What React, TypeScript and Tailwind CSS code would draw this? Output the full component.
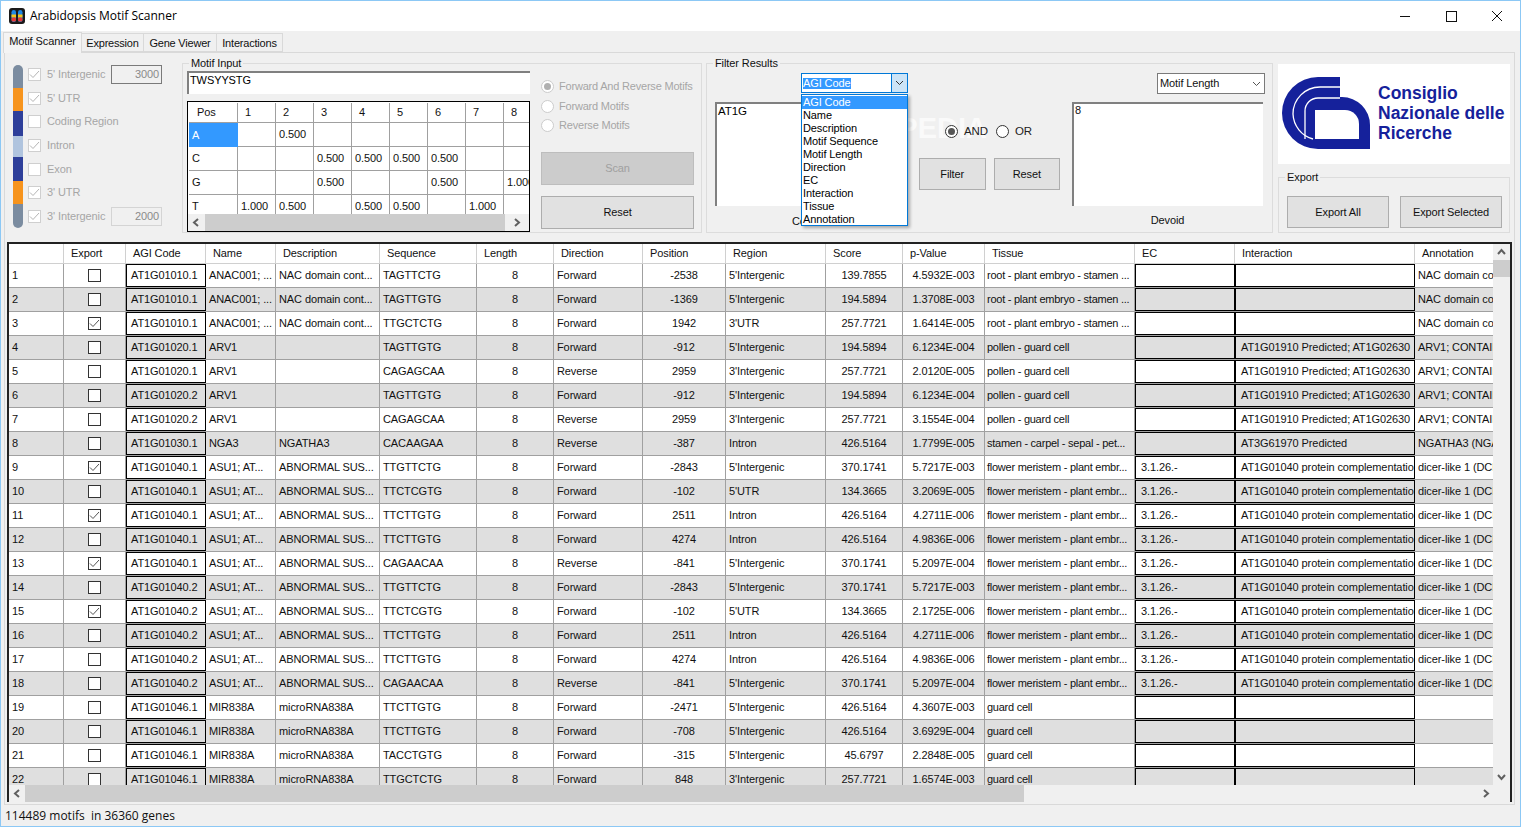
import React from "react";

const W = [55, 62, 80, 70, 104, 97, 77, 89, 83, 100, 77, 82, 150, 100, 180, 81];

const NAC = ["ANAC001; ...", "NAC domain cont...", "root - plant embryo - stamen ...", "", "", "NAC domain conta"];
const ARV = ["ARV1", "", "pollen - guard cell", "", "AT1G01910 Predicted; AT1G02630", "ARV1; CONTAINS"];
const ASU = ["ASU1; AT...", "ABNORMAL SUS...", "flower meristem - plant embr...", "3.1.26.-", "AT1G01040 protein complementatio", "dicer-like 1 (DCL1"];
const MIR = ["MIR838A", "microRNA838A", "guard cell", "", "", ""];
const NGA = ["NGA3", "NGATHA3", "stamen - carpel - sepal - pet...", "", "AT3G61970 Predicted", "NGATHA3 (NGA3"];

const rows: [boolean, string, string[], string, string, string, string, string, string][] = [
  [false, "AT1G01010.1", NAC, "TAGTTCTG", "Forward", "-2538", "5'Intergenic", "139.7855", "4.5932E-003"],
  [false, "AT1G01010.1", NAC, "TAGTTGTG", "Forward", "-1369", "5'Intergenic", "194.5894", "1.3708E-003"],
  [true, "AT1G01010.1", NAC, "TTGCTCTG", "Forward", "1942", "3'UTR", "257.7721", "1.6414E-005"],
  [false, "AT1G01020.1", ARV, "TAGTTGTG", "Forward", "-912", "5'Intergenic", "194.5894", "6.1234E-004"],
  [false, "AT1G01020.1", ARV, "CAGAGCAA", "Reverse", "2959", "3'Intergenic", "257.7721", "2.0120E-005"],
  [false, "AT1G01020.2", ARV, "TAGTTGTG", "Forward", "-912", "5'Intergenic", "194.5894", "6.1234E-004"],
  [false, "AT1G01020.2", ARV, "CAGAGCAA", "Reverse", "2959", "3'Intergenic", "257.7721", "3.1554E-004"],
  [false, "AT1G01030.1", NGA, "CACAAGAA", "Reverse", "-387", "Intron", "426.5164", "1.7799E-005"],
  [true, "AT1G01040.1", ASU, "TTGTTCTG", "Forward", "-2843", "5'Intergenic", "370.1741", "5.7217E-003"],
  [false, "AT1G01040.1", ASU, "TTCTCGTG", "Forward", "-102", "5'UTR", "134.3665", "3.2069E-005"],
  [true, "AT1G01040.1", ASU, "TTCTTGTG", "Forward", "2511", "Intron", "426.5164", "4.2711E-006"],
  [false, "AT1G01040.1", ASU, "TTCTTGTG", "Forward", "4274", "Intron", "426.5164", "4.9836E-006"],
  [true, "AT1G01040.1", ASU, "CAGAACAA", "Reverse", "-841", "5'Intergenic", "370.1741", "5.2097E-004"],
  [false, "AT1G01040.2", ASU, "TTGTTCTG", "Forward", "-2843", "5'Intergenic", "370.1741", "5.7217E-003"],
  [true, "AT1G01040.2", ASU, "TTCTCGTG", "Forward", "-102", "5'UTR", "134.3665", "2.1725E-006"],
  [false, "AT1G01040.2", ASU, "TTCTTGTG", "Forward", "2511", "Intron", "426.5164", "4.2711E-006"],
  [false, "AT1G01040.2", ASU, "TTCTTGTG", "Forward", "4274", "Intron", "426.5164", "4.9836E-006"],
  [false, "AT1G01040.2", ASU, "CAGAACAA", "Reverse", "-841", "5'Intergenic", "370.1741", "5.2097E-004"],
  [false, "AT1G01046.1", MIR, "TTCTTGTG", "Forward", "-2471", "5'Intergenic", "426.5164", "4.3607E-003"],
  [false, "AT1G01046.1", MIR, "TTCTTGTG", "Forward", "-708", "5'Intergenic", "426.5164", "3.6929E-004"],
  [false, "AT1G01046.1", MIR, "TACCTGTG", "Forward", "-315", "5'Intergenic", "45.6797", "2.2848E-005"],
  [false, "AT1G01046.1", MIR, "TTGCTCTG", "Forward", "848", "3'Intergenic", "257.7721", "1.6574E-003"],
];

const headers = ["", "Export", "AGI Code", "Name", "Description", "Sequence", "Length", "Direction", "Position", "Region", "Score", "p-Value", "Tissue", "EC", "Interaction", "Annotation"];

function Check({ checked, muted }: { checked: boolean; muted?: boolean }) {
  return (
    <span className={muted ? "flex h-[13px] w-[13px] shrink-0 items-center justify-center border border-[#cfcfcf] bg-white" : "flex h-[13px] w-[13px] shrink-0 items-center justify-center border border-[#333333] bg-white"}>
      {checked && (
        <svg width="11" height="9" viewBox="0 0 11 9" fill="none">
          <path d="M1 4.5 L4 7.5 L10 1" stroke={muted ? "#b5b5b5" : "#555555"} strokeWidth="1" />
        </svg>
      )}
    </span>
  );
}

function Cell({ w, className, children }: { w: number; className?: string; children?: React.ReactNode }) {
  return (
    <div style={{ width: w }} className={"flex h-full shrink-0 items-center overflow-hidden whitespace-nowrap border-r border-[#a0a0a0] " + (className ?? "")}>
      {children}
    </div>
  );
}

function BoxCell({ w, className, children }: { w: number; className?: string; children?: React.ReactNode }) {
  return (
    <div style={{ width: w }} className={"flex h-full shrink-0 items-center overflow-hidden whitespace-nowrap border border-black " + (className ?? "")}>
      {children}
    </div>
  );
}

function Chevron({ dir }: { dir: "l" | "r" | "u" | "d" }) {
  const d = { l: "M6 1 L2 4.5 L6 8", r: "M2 1 L6 4.5 L2 8", u: "M1 6 L4.5 2 L8 6", d: "M1 2 L4.5 6 L8 2" }[dir];
  return (
    <svg width="9" height="9" viewBox="0 0 9 9" fill="none">
      <path d={d} stroke="#606060" strokeWidth="2" />
    </svg>
  );
}

function RegionRow({ label, checked, value, strong }: { label: string; checked: boolean; value?: string; strong?: boolean }) {
  return (
    <div className="flex h-[18px] items-center">
      <Check checked={checked} muted />
      <span className="ml-[6px] text-[#a6a6a6]">{label}</span>
      {value && (
        <span className={strong ? "ml-auto flex h-[19px] w-[51px] items-center justify-end border border-[#7a7a7a] bg-[#f0f0f0] pr-[2px] text-[#8a8a8a]" : "ml-auto flex h-[19px] w-[51px] items-center justify-end border border-[#d4d4d4] bg-[#f0f0f0] pr-[2px] text-[#8a8a8a]"}>
          {value}
        </span>
      )}
    </div>
  );
}

function Radio({ label, checked, muted }: { label: string; checked?: boolean; muted?: boolean }) {
  return (
    <div className={muted ? "flex items-center gap-[5px] whitespace-nowrap" : "flex items-center gap-[6px] whitespace-nowrap"}>
      <span className={muted ? "flex h-[13px] w-[13px] shrink-0 items-center justify-center rounded-full border border-[#cccccc] bg-white" : "flex h-[13px] w-[13px] shrink-0 items-center justify-center rounded-full border border-[#333333] bg-white"}>
        {checked && <span className={muted ? "h-[7px] w-[7px] rounded-full bg-[#b0b0b0]" : "h-[7px] w-[7px] rounded-full bg-[#555555]"} />}
      </span>
      <span className={muted ? "tracking-[-0.2px] text-[#a6a6a6]" : "text-[11.5px] text-[#222222]"}>{label}</span>
    </div>
  );
}

function Btn({ children, className }: { children: React.ReactNode; className?: string }) {
  return (
    <div className={"flex items-center justify-center border border-[#adadad] bg-[#e1e1e1] text-[#111111] " + (className ?? "")}>{children}</div>
  );
}

function Group({ label, className, children }: { label: string; className?: string; children?: React.ReactNode }) {
  return (
    <div className={"relative border border-[#dcdcdc] " + (className ?? "")}>
      <span className="absolute left-[6px] top-[-8px] bg-[#f0f0f0] px-[2px] leading-[14px] text-[#111111]">{label}</span>
      {children}
    </div>
  );
}

const matrix = [
  ["A", "", "0.500", "", "", "", "", "", ""],
  ["C", "", "", "0.500", "0.500", "0.500", "0.500", "", ""],
  ["G", "", "", "0.500", "", "", "0.500", "", "1.000"],
  ["T", "1.000", "0.500", "", "0.500", "0.500", "", "1.000", ""],
];

const LIST = ["AGI Code", "Name", "Description", "Motif Sequence", "Motif Length", "Direction", "EC", "Interaction", "Tissue", "Annotation"];

export default function App() {
  return (
    <div className="flex h-[827px] w-[1521px] flex-col overflow-hidden border border-[#8cc8f5] bg-[#f0f0f0] text-[11px] leading-none tracking-[-0.1px] text-[#111111] [font-family:'Liberation_Sans',Arial,sans-serif]">
      {/* title */}
      <div className="flex h-[30px] shrink-0 items-center bg-white tracking-normal">
        <svg className="ml-[8px]" width="16" height="16" viewBox="0 0 16 16">
          <rect width="16" height="16" rx="3" fill="#1a1a1a" />
          <rect x="2.5" y="2" width="4.5" height="12" rx="2.2" fill="#1e88e5" />
          <rect x="9" y="2" width="4.5" height="12" rx="2.2" fill="#1e88e5" />
          <rect x="2.5" y="6.5" width="4.5" height="3" fill="#f5c518" />
          <rect x="9" y="6.5" width="4.5" height="3" fill="#f5c518" />
          <rect x="2.5" y="9.5" width="4.5" height="4" rx="1.5" fill="#e53935" />
          <rect x="9" y="9.5" width="4.5" height="4" rx="1.5" fill="#e53935" />
        </svg>
        <span className="ml-[5px] text-[12px] text-black [font-family:'Open_Sans',sans-serif]">Arabidopsis Motif Scanner</span>
        <div className="ml-auto flex items-center">
          <svg width="46" height="30" viewBox="0 0 46 30" fill="none"><path d="M18 15.5 H28" stroke="#111" /></svg>
          <svg width="46" height="30" viewBox="0 0 46 30" fill="none"><rect x="18.5" y="10.5" width="10" height="10" stroke="#111" /></svg>
          <svg width="46" height="30" viewBox="0 0 46 30" fill="none"><path d="M18 10 L28 20 M28 10 L18 20" stroke="#111" /></svg>
        </div>
      </div>

      {/* tabs */}
      <div className="flex h-[21px] shrink-0 items-end pl-[2px]">
        <div className="z-10 -mb-px flex h-[21px] w-[79px] items-center justify-center border border-b-0 border-[#d9d9d9] bg-[#f4f4f4] pb-[3px]">Motif Scanner</div>
        <div className="flex h-[19px] w-[62px] items-center justify-center border border-l-0 border-[#d9d9d9] pt-[1px] tracking-[-0.2px]">Expression</div>
        <div className="flex h-[19px] w-[73px] items-center justify-center border border-l-0 border-[#d9d9d9] pt-[1px] tracking-[-0.2px]">Gene Viewer</div>
        <div className="flex h-[19px] w-[66px] items-center justify-center border border-l-0 border-[#d9d9d9] pt-[1px] tracking-[-0.2px]">Interactions</div>
      </div>

      {/* tab page */}
      <div className="ml-[3px] mr-[5px] flex min-h-0 flex-1 flex-col border border-[#d9d9d9] bg-[#f0f0f0] pl-[2px] pr-[2px] pb-[2px]">
        {/* top */}
        <div className="flex h-[189px] shrink-0 pt-[10px]">
          <div className="ml-[6px] flex h-[165px] w-[149px] shrink-0">
            <div className="mt-[2px] flex h-[163px] w-[10px] shrink-0 flex-col overflow-hidden rounded-full">
              <div className="h-[23px] bg-[#7b8ca0]" />
              <div className="h-[23px] bg-[#f7941d]" />
              <div className="h-[25px] bg-[#2e3f9a]" />
              <div className="h-[21px] bg-[#b0c4de]" />
              <div className="h-[24px] bg-[#2e3f9a]" />
              <div className="h-[23px] bg-[#f7941d]" />
              <div className="h-[24px] bg-[#7b8ca0]" />
            </div>
            <div className="ml-[5px] mt-[2.5px] flex flex-1 flex-col gap-[5.67px]">
              <RegionRow label="5' Intergenic" checked value="3000" strong />
              <RegionRow label="5' UTR" checked />
              <RegionRow label="Coding Region" checked={false} />
              <RegionRow label="Intron" checked />
              <RegionRow label="Exon" checked={false} />
              <RegionRow label="3' UTR" checked />
              <RegionRow label="3' Intergenic" checked value="2000" />
            </div>
          </div>

          <Group label="Motif Input" className="ml-[20px] flex h-[170px] w-[520px] shrink-0 pl-[4px] pt-[7px]">
            <div className="flex w-[343px] shrink-0 flex-col">
              <div className="flex h-[23px] items-start border-2 border-b-0 border-r-0 border-[#808080] bg-white pl-[1px] pt-[2px] text-[11px] text-black">TWSYYSTG</div>
              <div className="mt-[7px] flex h-[131px] flex-col overflow-hidden border border-black bg-white">
                <div className="min-h-0 flex-1 overflow-hidden pl-[1px] pt-[1px]">
                  <div className="flex h-[20px]">
                    <div className="flex w-[49px] shrink-0 items-center border-r border-b border-[#a0a0a0] pb-[1px] pl-[8px]">Pos</div>
                    {[1, 2, 3, 4, 5, 6, 7, 8].map((n) => (
                      <div key={n} className="flex w-[38px] shrink-0 items-center border-r border-b border-[#a0a0a0] pb-[1px] pl-[7px]">{n}</div>
                    ))}
                  </div>
                  {matrix.map((m, i) => (
                    <div key={m[0]} className="flex h-[24px]">
                      <div className={i === 0 ? "flex w-[49px] shrink-0 items-center bg-[#3399ff] pl-[3px] text-white" : "flex w-[49px] shrink-0 items-center border-r border-b border-[#a0a0a0] pl-[3px]"}>{m[0]}</div>
                      {m.slice(1).map((v, j) => (
                        <div key={j} className="flex w-[38px] shrink-0 items-center overflow-hidden whitespace-nowrap border-r border-b border-[#a0a0a0] pl-[3px]">{v}</div>
                      ))}
                    </div>
                  ))}
                </div>
                <div className="flex h-[17px] shrink-0 items-center bg-[#f0f0f0]">
                  <div className="flex w-[17px] justify-center"><Chevron dir="l" /></div>
                  <div className="h-full flex-1 bg-[#cdcdcd]" />
                  <div className="flex w-[24px] justify-center"><Chevron dir="r" /></div>
                </div>
              </div>
            </div>
            <div className="ml-[11px] flex w-[153px] shrink-0 flex-col">
              <div className="flex flex-col gap-[6.5px] pt-[9px]">
                <Radio label="Forward And Reverse Motifs" checked muted />
                <Radio label="Forward Motifs" muted />
                <Radio label="Reverse Motifs" muted />
              </div>
              <div className="mt-[20px] flex h-[33px] shrink-0 items-center justify-center border border-[#bdbdbd] bg-[#cccccc] text-[#a0a0a0]">Scan</div>
              <Btn className="mt-[11px] h-[33px] shrink-0">Reset</Btn>
            </div>
          </Group>

          <Group label="Filter Results" className="ml-[4px] flex h-[170px] w-[567px] shrink-0 pl-[8px]">
            <div className="relative flex w-[193px] shrink-0 flex-col">
              <div className="ml-[86px] mt-[9px] flex h-[20px] w-[107px] items-center border border-[#0078d7] bg-white pl-[1px]">
                <span className="bg-[#3399ff] text-white">AGI Code</span>
                <div className="ml-auto flex h-full w-[16px] items-center justify-center border-l border-[#0078d7] bg-[#cce4f7]">
                  <svg width="9" height="6" viewBox="0 0 9 6" fill="none"><path d="M1 1 L4.5 4.5 L8 1" stroke="#333" /></svg>
                </div>
              </div>
              <div className="mt-[9px] flex h-[104px] w-[160px] items-start border-2 border-b-0 border-r-0 border-[#808080] bg-white pl-[1px] pt-[2px] text-[11.5px] text-black">AT1G</div>
              <div className="ml-[77px] mt-[10px]">Contains</div>
              <span className="absolute left-[106px] top-[50px] whitespace-nowrap text-[29px] font-bold tracking-normal text-white/70">SOFTPEDIA</span>
              {/* open list */}
              <div className="absolute left-[86px] top-[30px] z-20 flex h-[132px] w-[107px] flex-col border border-[#0078d7] bg-white pt-[1px] leading-[13px] text-black shadow-[2px_2px_3px_rgba(0,0,0,0.3)]">
                {LIST.map((t, i) => (
                  <div key={t} className={i === 0 ? "h-[13px] shrink-0 bg-[#3399ff] pl-[1px] text-white" : "h-[13px] shrink-0 pl-[1px]"}>{t}</div>
                ))}
              </div>
            </div>
            <div className="relative ml-[11px] flex w-[141px] shrink-0 flex-col">
              <div className="mt-[61px] flex items-center gap-[8px] pl-[26px]">
                <Radio label="AND" checked />
                <Radio label="OR" />
              </div>
              <div className="mt-[20px] flex gap-[8px]">
                <Btn className="h-[32px] w-[67px]">Filter</Btn>
                <Btn className="h-[32px] w-[67px]">Reset</Btn>
              </div>
            </div>
            <div className="ml-[12px] flex w-[193px] shrink-0 flex-col">
              <div className="ml-[85px] mt-[9px] flex h-[21px] w-[108px] items-center border border-[#7a7a7a] bg-white pl-[2px]">
                Motif Length
                <svg className="ml-auto mr-[3px]" width="9" height="6" viewBox="0 0 9 6" fill="none"><path d="M1 1 L4.5 4.5 L8 1" stroke="#555" /></svg>
              </div>
              <div className="mt-[8px] flex h-[104px] w-[191px] items-start border-2 border-b-0 border-r-0 border-[#808080] bg-white pl-[1px] pt-[1px]">8</div>
              <div className="mt-[9px] w-[191px] text-center">Devoid</div>
            </div>
          </Group>

          <div className="ml-[5px] flex w-[232px] shrink-0 flex-col">
            <div className="mt-[1px] flex h-[100px] shrink-0 items-center bg-white pb-[2px] pl-[4px]">
              <svg width="88" height="72" viewBox="0 0 88 72" fill="none">
                <path d="M58 0 H36 A36 36 0 0 0 36 72 H88 V48 A28 28 0 0 0 60 20 H58 Z" fill="#15219b" />
                <path d="M33 62 V33 H63 A14 14 0 0 1 77 47 V62 Z" fill="white" />
                <path d="M58 10 H38 A27 27 0 0 0 11 37 A27 27 0 0 0 31 62" stroke="white" strokeWidth="1.3" />
                <path d="M58 21 H36 A13 13 0 0 0 23 34 V62" stroke="white" strokeWidth="1.3" />
              </svg>
              <div className="ml-[8px] text-[17.5px] font-bold leading-[20px] tracking-normal text-[#15219b]">
                <div>Consiglio</div>
                <div className="whitespace-nowrap">Nazionale delle</div>
                <div>Ricerche</div>
              </div>
            </div>
            <Group label="Export" className="mt-[13px] flex h-[56px] shrink-0 gap-[11px] pl-[8px] pt-[18px]">
              <Btn className="h-[32px] w-[102px]">Export All</Btn>
              <Btn className="h-[32px] w-[102px]">Export Selected</Btn>
            </Group>
          </div>
        </div>

        {/* grid */}
        <div className="flex min-h-0 flex-1 flex-col overflow-hidden border-x-2 border-t-2 border-[#222222] bg-white">
          <div className="flex min-h-0 flex-1 overflow-hidden">
            <div className="min-w-0 flex-1 overflow-hidden">
              <div className="flex h-[20px] w-[1600px] items-center">
                {headers.map((h, i) => (
                  <div key={i} style={{ width: W[i] }} className="flex h-full shrink-0 items-center whitespace-nowrap border-b border-r border-[#d0d0d0] pl-[7px]">{h}</div>
                ))}
              </div>
              {rows.map((r, i) => {
                const [checked, agi, g, seq, dir, pos, region, score, p] = r;
                const bg = i % 2 === 0 ? "flex h-[24px] w-[1600px] border-b border-[#a0a0a0] bg-white" : "flex h-[24px] w-[1600px] border-b border-[#a0a0a0] bg-[#dfdfdf]";
                return (
                  <div key={i} className={bg}>
                    <Cell w={W[0]} className="pl-[3px]">{i + 1}</Cell>
                    <Cell w={W[1]} className="justify-center"><Check checked={checked} /></Cell>
                    <BoxCell w={W[2]} className="pl-[4px]">{agi}</BoxCell>
                    <Cell w={W[3]} className="pl-[3px]">{g[0]}</Cell>
                    <Cell w={W[4]} className="pl-[3px]">{g[1]}</Cell>
                    <Cell w={W[5]} className="pl-[3px]">{seq}</Cell>
                    <Cell w={W[6]} className="justify-center">8</Cell>
                    <Cell w={W[7]} className="pl-[3px]">{dir}</Cell>
                    <Cell w={W[8]} className="justify-center">{pos}</Cell>
                    <Cell w={W[9]} className="pl-[3px]">{region}</Cell>
                    <Cell w={W[10]} className="justify-center">{score}</Cell>
                    <Cell w={W[11]} className="justify-center">{p}</Cell>
                    <Cell w={W[12]} className="pl-[2px] tracking-[-0.25px]">{g[2]}</Cell>
                    <BoxCell w={W[13]} className="pl-[5px]">{g[3]}</BoxCell>
                    <BoxCell w={W[14]} className="pl-[5px]">{g[4]}</BoxCell>
                    <div style={{ width: W[15] }} className="flex h-full shrink-0 items-center overflow-hidden whitespace-nowrap pl-[3px]">{g[5]}</div>
                  </div>
                );
              })}
            </div>
            <div className="flex w-[17px] shrink-0 flex-col items-center bg-[#f0f0f0]">
              <div className="flex h-[16px] items-center"><Chevron dir="u" /></div>
              <div className="h-[17px] w-full bg-[#cdcdcd]" />
              <div className="mt-auto flex h-[16px] items-center"><Chevron dir="d" /></div>
            </div>
          </div>
          <div className="flex h-[17px] shrink-0 items-center bg-[#f0f0f0]">
            <div className="flex w-[16px] justify-center"><Chevron dir="l" /></div>
            <div className="h-full w-[999px] bg-[#cdcdcd]" />
            <div className="ml-auto mr-[15px] flex w-[17px] justify-center"><Chevron dir="r" /></div>
          </div>
        </div>
      </div>

      {/* status */}
      <div className="flex h-[21px] shrink-0 items-center pl-[4px] text-[12px] tracking-normal [font-family:'Open_Sans',sans-serif]">114489 motifs&nbsp; in 36360 genes</div>
    </div>
  );
}
